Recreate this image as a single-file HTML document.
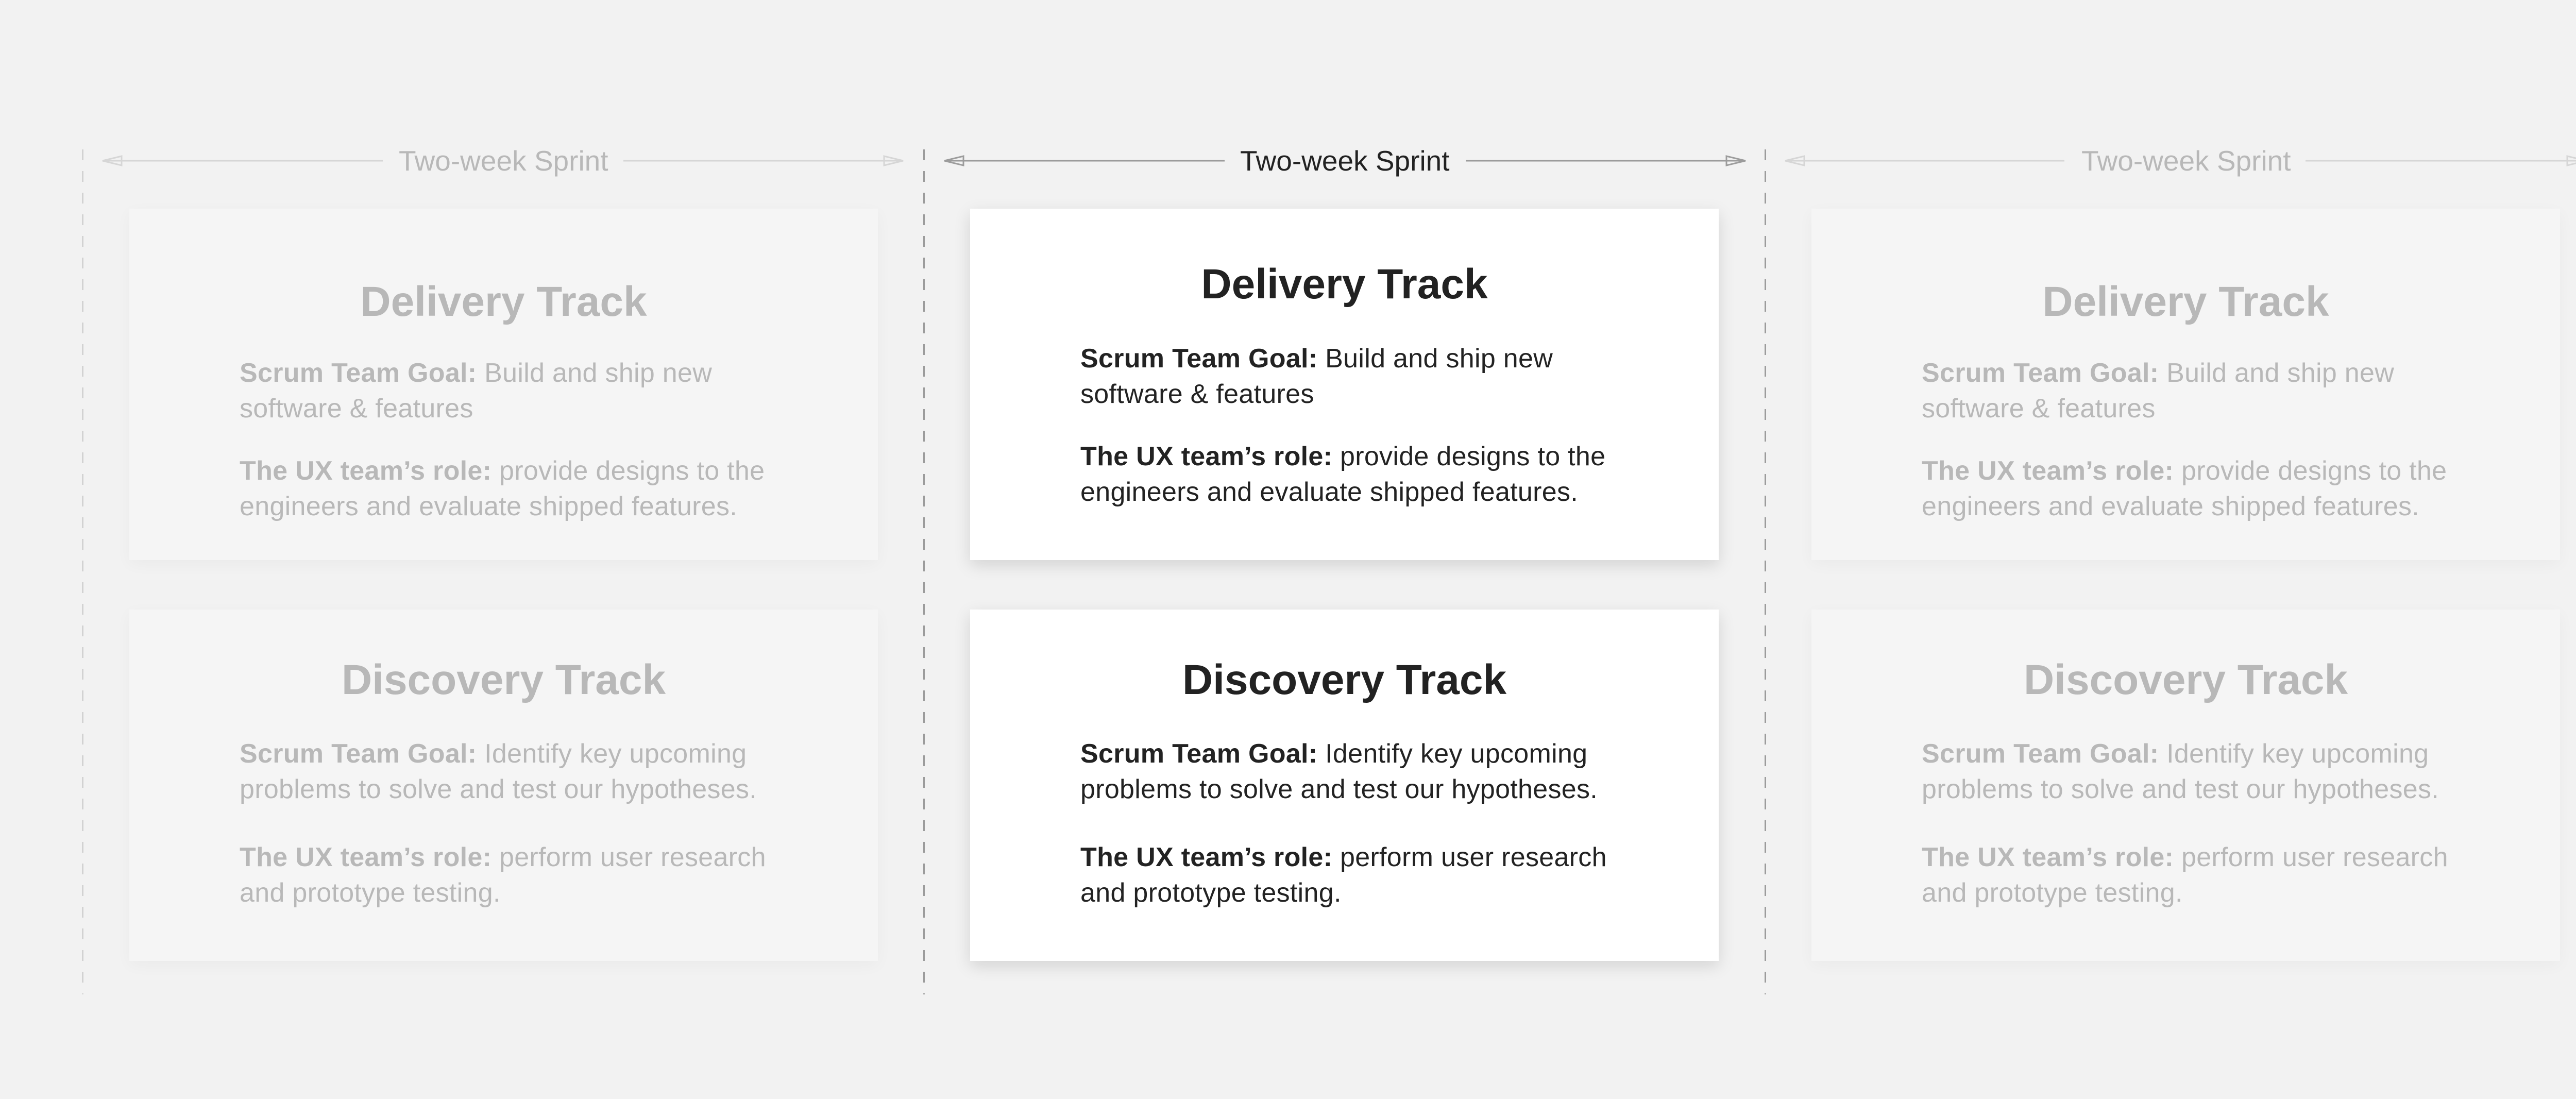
<!DOCTYPE html>
<html><head><meta charset="utf-8">
<style>
html,body{margin:0;padding:0}
body{width:5235px;height:2133px;background:#f2f2f2;position:relative;overflow:hidden;font-family:"Liberation Sans",sans-serif}
.dash{position:absolute;top:290px;height:1640px;width:3px;background:repeating-linear-gradient(to bottom,var(--c) 0 21px,transparent 21px 42px)}
.card{position:absolute;width:1453px;height:682px;box-sizing:border-box}
.side{background:#f5f5f5;color:#b8b8b8;box-shadow:0 8px 30px rgba(0,0,0,0.035)}
.mid{background:#fff;color:#222;box-shadow:0 10px 30px rgba(0,0,0,0.13)}
.t{position:absolute;left:0;right:0;text-align:center;font-weight:bold;font-size:82px;line-height:90px;letter-spacing:0px;white-space:nowrap}
.p{position:absolute;left:214px;width:1200px;font-size:52px;line-height:69px;letter-spacing:0.3px;white-space:nowrap}
.p b{font-weight:bold}
.lbl{position:absolute;top:278px;font-size:55px;line-height:68px;white-space:nowrap}
</style></head><body>

<div class="dash" style="left:159px;--c:#d2d2d2"></div>
<div class="dash" style="left:1792px;--c:#9c9c9c"></div>
<div class="dash" style="left:3425px;--c:#9c9c9c"></div>
<div class="dash" style="left:5057px;--c:#d2d2d2"></div>

<svg width="5235" height="400" style="position:absolute;left:0;top:0">
 <g stroke="#d6d6d6" stroke-width="3" fill="none">
  <line x1="200" y1="312" x2="743" y2="312"/><line x1="1210" y1="312" x2="1752" y2="312"/>
  <polygon points="199,312 236,303 236,321"/><polygon points="1753,312 1716,303 1716,321"/>
  <line x1="3466" y1="312" x2="4007" y2="312"/><line x1="4475" y1="312" x2="5019" y2="312"/>
  <polygon points="3465,312 3502,303 3502,321"/><polygon points="5020,312 4983,303 4983,321"/>
 </g>
 <g stroke="#9c9c9c" stroke-width="3" fill="none">
  <line x1="1834" y1="312" x2="2377" y2="312"/><line x1="2845" y1="312" x2="3387" y2="312"/>
  <polygon points="1833,312 1870,303 1870,321"/><polygon points="3388,312 3351,303 3351,321"/>
 </g>
</svg>
<div class="lbl" style="left:774px;color:#b8b8b8">Two-week Sprint</div>
<div class="lbl" style="left:2407px;color:#222">Two-week Sprint</div>
<div class="lbl" style="left:4040px;color:#b8b8b8">Two-week Sprint</div>

<!-- left -->
<div class="card side" style="left:251px;top:405px">
 <div class="t" style="top:136px">Delivery Track</div>
 <div class="p" style="top:285px"><b>Scrum Team Goal:</b> Build and ship new<br>software &amp; features</div>
 <div class="p" style="top:475px"><b>The UX team’s role:</b> provide designs to the<br>engineers and evaluate shipped features.</div>
</div>
<div class="card side" style="left:251px;top:1183px">
 <div class="t" style="top:92px">Discovery Track</div>
 <div class="p" style="top:246px"><b>Scrum Team Goal:</b> Identify key upcoming<br>problems to solve and test our hypotheses.</div>
 <div class="p" style="top:447px"><b>The UX team’s role:</b> perform user research<br>and prototype testing.</div>
</div>

<!-- middle -->
<div class="card mid" style="left:1883px;top:405px">
 <div class="t" style="top:102px">Delivery Track</div>
 <div class="p" style="top:257px"><b>Scrum Team Goal:</b> Build and ship new<br>software &amp; features</div>
 <div class="p" style="top:447px"><b>The UX team’s role:</b> provide designs to the<br>engineers and evaluate shipped features.</div>
</div>
<div class="card mid" style="left:1883px;top:1183px">
 <div class="t" style="top:92px">Discovery Track</div>
 <div class="p" style="top:246px"><b>Scrum Team Goal:</b> Identify key upcoming<br>problems to solve and test our hypotheses.</div>
 <div class="p" style="top:447px"><b>The UX team’s role:</b> perform user research<br>and prototype testing.</div>
</div>

<!-- right -->
<div class="card side" style="left:3516px;top:405px">
 <div class="t" style="top:136px">Delivery Track</div>
 <div class="p" style="top:285px"><b>Scrum Team Goal:</b> Build and ship new<br>software &amp; features</div>
 <div class="p" style="top:475px"><b>The UX team’s role:</b> provide designs to the<br>engineers and evaluate shipped features.</div>
</div>
<div class="card side" style="left:3516px;top:1183px">
 <div class="t" style="top:92px">Discovery Track</div>
 <div class="p" style="top:246px"><b>Scrum Team Goal:</b> Identify key upcoming<br>problems to solve and test our hypotheses.</div>
 <div class="p" style="top:447px"><b>The UX team’s role:</b> perform user research<br>and prototype testing.</div>
</div>

</body></html>
